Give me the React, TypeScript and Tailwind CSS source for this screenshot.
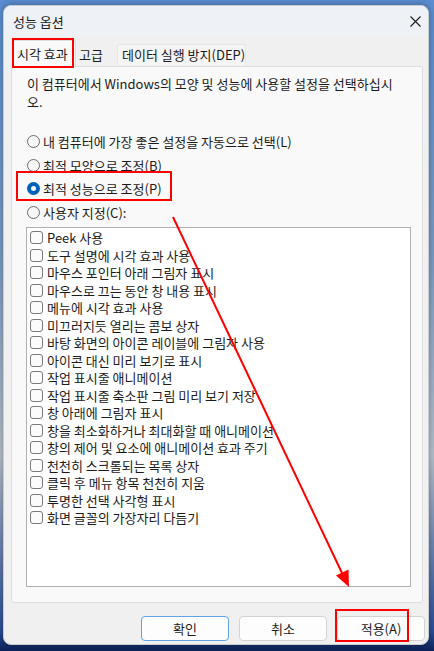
import React from 'react';

const radios = [
  { label: '내 컴퓨터에 가장 좋은 설정을 자동으로 선택(L)', checked: false },
  { label: '최적 모양으로 조정(B)', checked: false },
  { label: '최적 성능으로 조정(P)', checked: true },
  { label: '사용자 지정(C):', checked: false },
];

const effects = [
  'Peek 사용',
  '도구 설명에 시각 효과 사용',
  '마우스 포인터 아래 그림자 표시',
  '마우스로 끄는 동안 창 내용 표시',
  '메뉴에 시각 효과 사용',
  '미끄러지듯 열리는 콤보 상자',
  '바탕 화면의 아이콘 레이블에 그림자 사용',
  '아이콘 대신 미리 보기로 표시',
  '작업 표시줄 애니메이션',
  '작업 표시줄 축소판 그림 미리 보기 저장',
  '창 아래에 그림자 표시',
  '창을 최소화하거나 최대화할 때 애니메이션',
  '창의 제어 및 요소에 애니메이션 효과 주기',
  '천천히 스크롤되는 목록 상자',
  '클릭 후 메뉴 항목 천천히 지움',
  '투명한 선택 사각형 표시',
  '화면 글꼴의 가장자리 다듬기',
];

export default function App() {
  return (
    <div className="relative w-[434px] h-[651px] overflow-hidden bg-[linear-gradient(180deg,#5b8fd2_0%,#7f9fc6_40%,#b9c3cf_70%,#2a4f98_97%,#0b2259_100%)] font-['Noto_Sans_CJK_KR',sans-serif] text-[13px] text-[#1b1b1b]">
      {/* Dialog window */}
      <div className="ml-[3px] mt-[5px] w-[426px] h-[640px] flex flex-col rounded-[8px] bg-[#f0f0f0] border border-[#c9cdd2] shadow-[0_0_8px_rgba(0,0,0,0.35)] overflow-hidden">
        {/* Title bar */}
        <div className="h-[30px] shrink-0 flex items-center justify-between bg-[#eef2f7] pl-[9px] pr-[7px]">
          <span className="leading-none">성능 옵션</span>
          <svg width="11" height="11" viewBox="0 0 11 11">
            <path d="M0.5 0.5 L10.5 10.5 M10.5 0.5 L0.5 10.5" stroke="#1b1b1b" strokeWidth="1.1" />
          </svg>
        </div>

        {/* Tabs */}
        <div className="h-[30px] shrink-0 flex items-end pl-[8px] whitespace-nowrap">
          <div className="relative h-[27px] w-[64px] flex items-center pl-[4px] bg-[#f9f9f9] border border-b-0 border-[#dedede] rounded-t-[3px] -mb-px">
            시각 효과
          </div>
          <div className="h-[21px] w-[41px] flex items-center pl-[3px] mb-[1px] bg-[#f0f0f0]">
            고급
          </div>
          <div className="h-[21px] w-[129px] flex items-center pl-[4px] mb-[1px] bg-[#f5f5f5] border border-b-0 border-[#e6e6e6] rounded-t-[3px]">
            데이터 실행 방지(DEP)
          </div>
        </div>

        {/* Tab panel */}
        <div className="ml-[7px] mr-[5px] h-[537px] shrink-0 bg-[#f9f9f9] border border-[#dedede] rounded-[3px] flex flex-col">
          <p className="ml-[15px] mt-[8px] leading-[18px]">
            <span className="whitespace-nowrap">이 컴퓨터에서 Windows의 모양 및 성능에 사용할 설정을 선택하십시</span>
            <br />오.
          </p>

          <div className="ml-[15px] mt-[19px] flex flex-col">
            {radios.map((r) => (
              <div key={r.label} className="h-[23.5px] flex items-center gap-[3px]">
                {r.checked ? (
                  <span className="w-[13px] h-[13px] rounded-full bg-[#005fb8] flex items-center justify-center">
                    <span className="w-[5px] h-[5px] rounded-full bg-white" />
                  </span>
                ) : (
                  <span className="w-[13px] h-[13px] rounded-full border border-[#6b6b6b] bg-[#f7f7f7]" />
                )}
                <span>{r.label}</span>
              </div>
            ))}
          </div>

          <div className="ml-[14px] mt-[3px] w-[385px] h-[360px] bg-white border border-[#b0b0b0] pt-[1px] pl-[3px]">
            {effects.map((e) => (
              <div key={e} className="h-[17.5px] flex items-center gap-[4px]">
                <span className="w-[13px] h-[13px] rounded-[3px] border border-[#7a7a7a] bg-[#fbfbfb]" />
                <span>{e}</span>
              </div>
            ))}
          </div>
        </div>

        {/* Buttons */}
        <div className="mt-[13px] mr-[3px] flex justify-end gap-[10px]">
          <button className="w-[88px] h-[25px] rounded-[4px] bg-[#fdfdfd] border border-[#5fa3e3]">확인</button>
          <button className="w-[88px] h-[25px] rounded-[4px] bg-[#fdfdfd] border border-[#d3d3d3]">취소</button>
          <button className="w-[88px] h-[25px] rounded-[4px] bg-[#fdfdfd] border border-[#d3d3d3]">적용(A)</button>
        </div>
      </div>

      {/* Red annotations */}
      <div className="absolute z-20 left-[12px] top-[38px] w-[62px] h-[30px] border-2 border-[#ff0000]" />
      <div className="absolute z-20 left-[16px] top-[171px] w-[156px] h-[30px] border-2 border-[#ff0000]" />
      <div className="absolute z-20 left-[335px] top-[609px] w-[74px] h-[33px] border-2 border-[#ff0000]" />
      <svg className="absolute z-20 left-0 top-0" width="434" height="651" viewBox="0 0 434 651">
        <line x1="173" y1="217" x2="342" y2="573" stroke="#ff0000" strokeWidth="2" />
        <polygon points="349,587 336,575.5 348.5,569.5" fill="#ff0000" />
      </svg>
    </div>
  );
}
